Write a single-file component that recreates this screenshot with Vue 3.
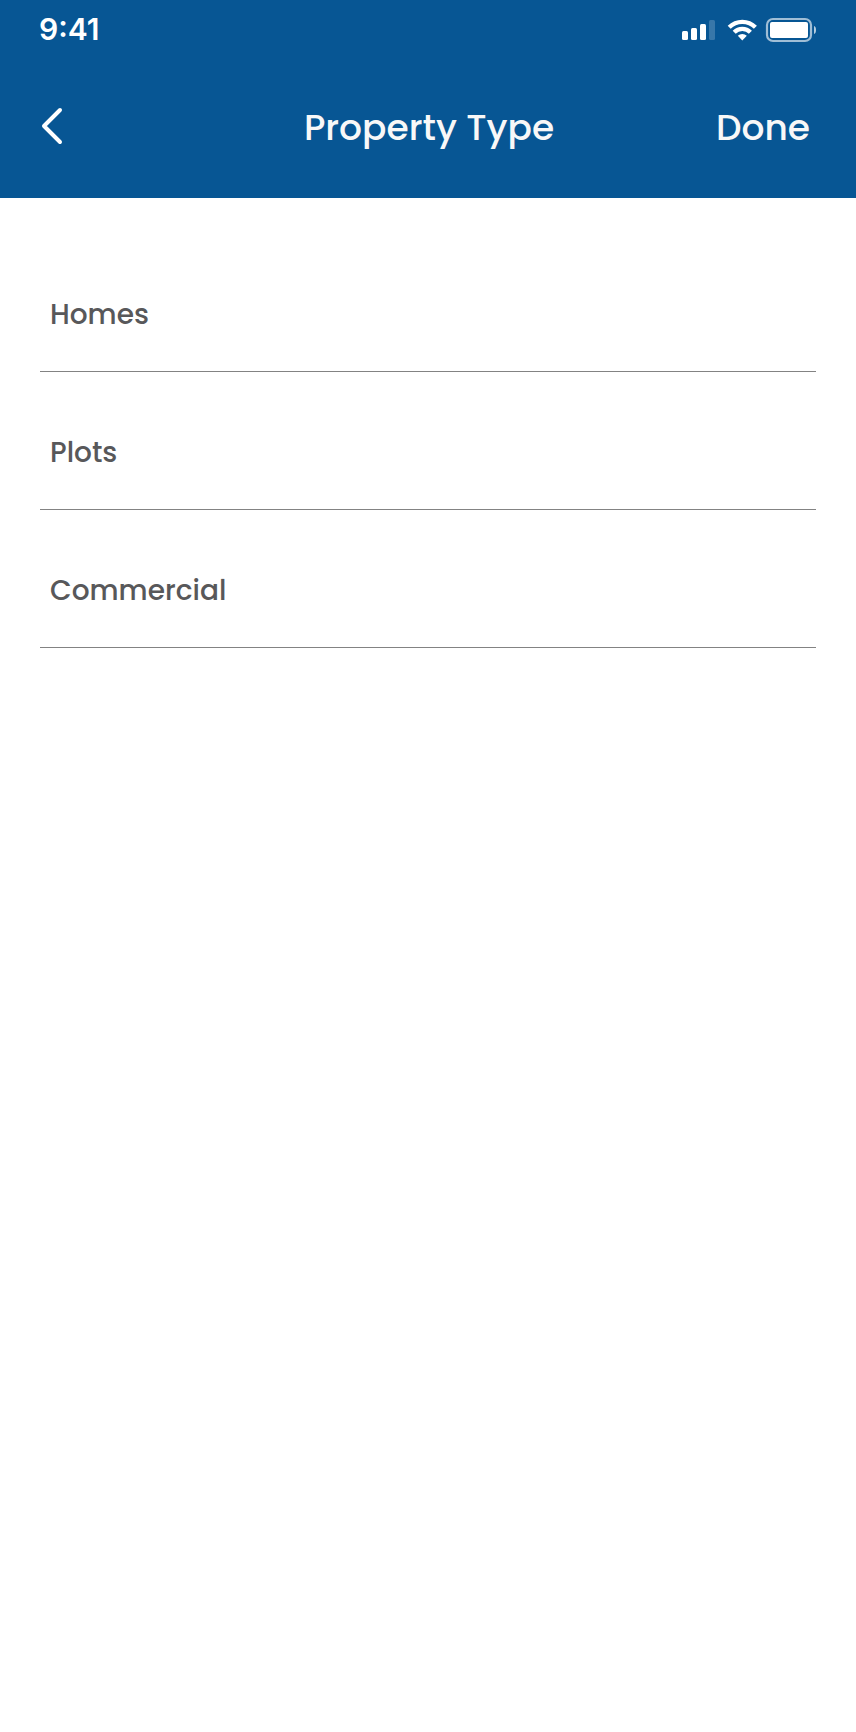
<template>
  <div class="screen">
    <header class="header">
      <div class="status-bar">
        <span class="time">9:41</span>
        <svg class="status-icons" width="136" height="26" viewBox="0 0 136 26" fill="#fff">
          <rect x="2" y="14" width="6" height="9" rx="1.5" />
          <rect x="11" y="11" width="6" height="12" rx="1.5" />
          <rect x="20" y="7" width="6" height="16" rx="1.5" />
          <rect x="29" y="3" width="6" height="20" rx="1.5" opacity="0.2" />
          <g fill="none" stroke="#fff" stroke-width="4.2">
            <path d="M49.2 10.3a18.3 18.3 0 0 1 26.2 0" />
            <path d="M54.2 15.3a11.2 11.2 0 0 1 16.2 0" />
          </g>
          <path d="M57.8 18.8a6.3 6.3 0 0 1 9 0L62.3 23.4z" />
          <rect x="87" y="2" width="44" height="22" rx="6" fill="none" stroke="#fff" stroke-width="2.2" opacity="0.62" />
          <rect x="90" y="5" width="38" height="16" rx="2" />
          <path d="M134 9q2 .5 2 4t-2 4z" opacity="0.7" />
        </svg>
      </div>
      <div class="nav-bar">
        <button class="back" aria-label="Back" @click="goBack">
          <svg width="24" height="40" viewBox="0 0 24 40" fill="none" stroke="#fff" stroke-width="4" stroke-linecap="round" stroke-linejoin="round">
            <path d="M20 4L4 20l16 16" />
          </svg>
        </button>
        <h1 class="title">Property Type</h1>
        <button class="done" @click="done">Done</button>
      </div>
    </header>
    <ul class="list">
      <li
        v-for="type in propertyTypes"
        :key="type.id"
        class="item"
        @click="selected = type.id"
      >
        <span class="label">{{ type.name }}</span>
      </li>
    </ul>
  </div>
</template>

<script setup>
import { ref } from 'vue';

const emit = defineEmits(['back', 'done']);

const propertyTypes = [
  { id: 'homes', name: 'Homes' },
  { id: 'plots', name: 'Plots' },
  { id: 'commercial', name: 'Commercial' },
];

const selected = ref(null);

function goBack() {
  emit('back');
}

function done() {
  emit('done', selected.value);
}
</script>

<style>
body {
  background: #fff;
}
</style>

<style scoped>
.screen {
  min-height: 1732px;
  background: #fff;
  font-family: Poppins, Inter, sans-serif;
}
.header {
  height: 198px;
  box-sizing: border-box;
  background: #075694;
  color: #fff;
}
.status-bar {
  display: flex;
  justify-content: space-between;
  align-items: center;
  height: 60px;
  padding: 0 40px 0 39px;
}
.time {
  font-family: Inter, sans-serif;
  font-size: 30px;
  font-weight: 600;
  line-height: 36px;
  padding-bottom: 3px;
}
.status-icons {
  display: block;
}
.nav-bar {
  display: grid;
  grid-template-columns: 1fr auto 1fr;
  align-items: center;
  height: 135px;
  padding: 0 38px 0 40px;
}
.back,
.done {
  padding: 0;
  border: 0;
  background: none;
  color: #f8f8f8;
  font-family: inherit;
  cursor: pointer;
}
.back {
  justify-self: start;
  display: block;
  padding-bottom: 3px;
}
.back svg {
  display: block;
}
.title {
  margin: 0;
  color: #f8f8f8;
  font-size: 36px;
  font-weight: 500;
  line-height: 48px;
  white-space: nowrap;
}
.done {
  justify-self: end;
  margin-right: 8px;
  font-size: 36px;
  font-weight: 500;
  line-height: 48px;
}
.list {
  margin: 0;
  padding: 36px 40px 0;
  list-style: none;
}
.item {
  display: flex;
  align-items: center;
  height: 138px;
  box-sizing: border-box;
  padding: 24px 10px 0;
  border-bottom: 1px solid #838383;
  cursor: pointer;
}
.label {
  color: #58585a;
  font-size: 28px;
  font-weight: 500;
  line-height: 40px;
}
</style>
